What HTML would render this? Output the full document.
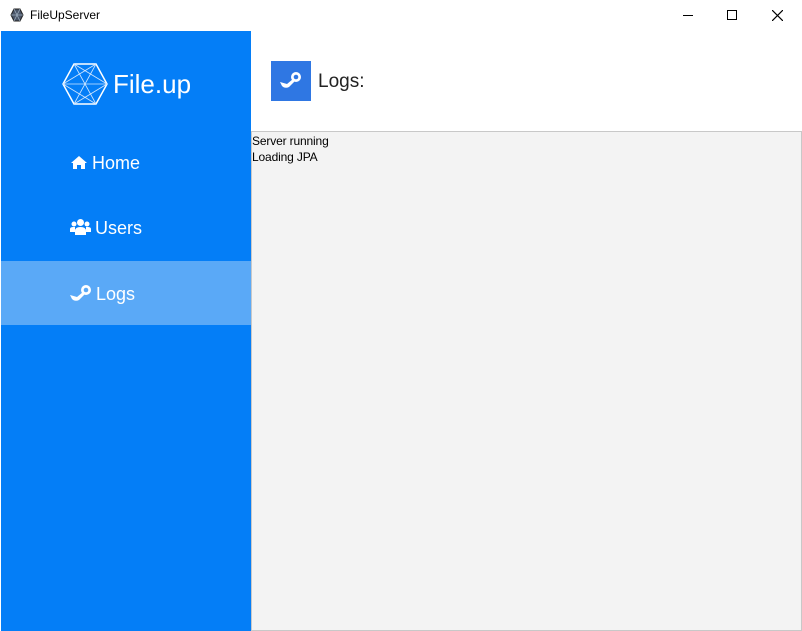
<!DOCTYPE html>
<html><head><style>
*{margin:0;padding:0;box-sizing:border-box}
body{width:802px;height:631px;background:#fff;font-family:"Liberation Sans",sans-serif;position:relative;overflow:hidden}
.abs{position:absolute}
.nav{color:#fff;font-size:18px;left:70px}
</style></head><body>
<div class="abs" style="left:0;top:0;width:802px;height:31px;background:#fff"></div>
<svg class="abs" style="left:10px;top:8px" width="14" height="14" viewBox="0 0 14 14"><polygon points="4,1 10,1 13,7 10,13 4,13 1,7" fill="#4a5568" stroke="#222" stroke-width="1"/><path d="M4 1L10 13M10 1L4 13M1 7H13" stroke="#9ab" stroke-width="0.8"/></svg>
<div class="abs" style="left:30px;top:8px;font-size:12px;color:#000">FileUpServer</div>
<div class="abs" style="left:683px;top:15px;width:10px;height:1px;background:#000"></div>
<div class="abs" style="left:727px;top:10px;width:10px;height:10px;border:1px solid #000"></div>
<svg class="abs" style="left:772px;top:10px" width="11" height="11"><path d="M0 0L11 11M11 0L0 11" stroke="#000" stroke-width="1.2"/></svg>

<div class="abs" style="left:1px;top:31px;width:250px;height:600px;background:#047ef7"></div>
<div class="abs" style="left:1px;top:261px;width:250px;height:64px;background:#5aa9f7"></div>
<svg class="abs" style="left:62px;top:63px" width="46" height="42" viewBox="0 0 46 42"><g fill="none" stroke="#fff" stroke-width="1.5"><polygon points="12,1 34,1 45,21 34,41 12,41 1,21"/></g><g fill="none" stroke="#cfe6ff" stroke-width="0.8"><path d="M12 1L34 41M34 1L12 41M1 21L45 21M12 1L45 21M34 1L1 21M12 41L45 21M34 41L1 21"/></g></svg>
<div class="abs" style="left:113px;top:69px;font-size:26px;color:#fff">File.up</div>

<svg class="abs" style="left:70px;top:155px" width="18" height="15" viewBox="0 0 18 15"><path d="M9 1L1 8H3V14H7V10H11V14H15V8H17Z" fill="#fff"/></svg>
<div class="abs nav" style="left:92px;top:153px">Home</div>
<svg class="abs" style="left:70px;top:218px" width="21" height="18" viewBox="0 0 21 18"><g fill="#fff"><circle cx="10.5" cy="4.5" r="3.5"/><circle cx="4" cy="6" r="2.5"/><circle cx="17" cy="6" r="2.5"/><path d="M5 17V13Q5 9 10.5 9Q16 9 16 13V17Z"/><path d="M0 14V11Q0 9 3.5 9H5V14Z"/><path d="M21 14V11Q21 9 17.5 9H16V14Z"/></g></svg>
<div class="abs nav" style="left:95px;top:218px">Users</div>
<svg class="abs" style="left:70px;top:284px" width="22" height="18" viewBox="0 0 22 18"><g fill="#fff"><circle cx="16" cy="6" r="5"/><path d="M0 11L7 13L13 8L15 10L9 16Q5 18 2 15Z"/></g><circle cx="16" cy="6" r="2.3" fill="#5aa9f7"/></svg>
<div class="abs nav" style="left:96px;top:284px">Logs</div>

<div class="abs" style="left:271px;top:61px;width:40px;height:40px;background:#2f77e3"></div>
<svg class="abs" style="left:280px;top:71px" width="22" height="18" viewBox="0 0 22 18"><g fill="#fff"><circle cx="16" cy="6" r="5"/><path d="M0 11L7 13L13 8L15 10L9 16Q5 18 2 15Z"/></g><circle cx="16" cy="6" r="2.3" fill="#2f77e3"/></svg>
<div class="abs" style="left:318px;top:71px;font-size:19px;color:#222">Logs:</div>

<div class="abs" style="left:251px;top:131px;width:551px;height:500px;background:#f3f3f3;border:1px solid #c8c8c8"></div>
<div class="abs" style="left:252px;top:133px;font-size:12px;line-height:16px;color:#000;letter-spacing:-0.15px">Server running<br>Loading JPA</div>
</body></html>
